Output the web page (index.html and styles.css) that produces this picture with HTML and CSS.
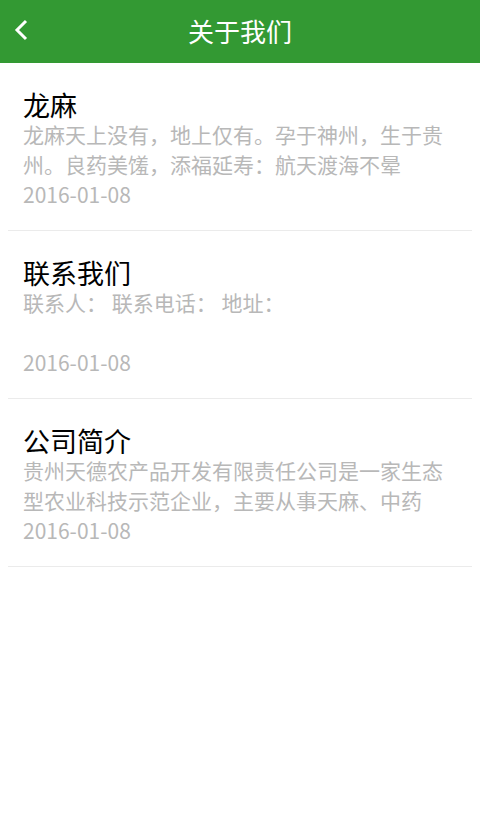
FILE: index.html
```html
<!DOCTYPE html>
<html lang="zh-CN">
<head>
<meta charset="utf-8">
<title>关于我们</title>
<link rel="stylesheet" href="styles.css">
</head>
<body>
<header class="topbar">
  <a class="back" href="#" aria-label="返回">
    <svg class="back-icon" width="14" height="22" viewBox="0 0 14 22">
      <polyline points="12,2 3,11 12,20" fill="none" stroke="#ffffff" stroke-width="3" stroke-linecap="butt" stroke-linejoin="miter"/>
    </svg>
  </a>
  <h1 class="title">关于我们</h1>
  <span class="spacer"></span>
</header>
<main class="list">
  <div class="item">
    <div class="item-title">龙麻</div>
    <div class="item-desc">龙麻天上没有，地上仅有。孕于神州，生于贵州。良药美馐，添福延寿：航天渡海不晕</div>
    <div class="item-date">2016-01-08</div>
  </div>
  <div class="item">
    <div class="item-title">联系我们</div>
    <div class="item-desc">联系人： 联系电话： 地址：</div>
    <div class="item-date">2016-01-08</div>
  </div>
  <div class="item">
    <div class="item-title">公司简介</div>
    <div class="item-desc">贵州天德农产品开发有限责任公司是一家生态型农业科技示范企业，主要从事天麻、中药</div>
    <div class="item-date">2016-01-08</div>
  </div>
</main>
</body>
</html>
```
FILE: styles.css
```css
html, body {
  margin: 0;
  padding: 0;
  background: #ffffff;
}
body {
  font-family: "Noto Sans CJK SC", "Noto Sans", sans-serif;
  width: 480px;
}
.topbar {
  height: 63px;
  background: #339933;
  display: grid;
  grid-template-columns: 1fr auto 1fr;
  align-items: center;
}
.back {
  display: flex;
  align-items: center;
  padding-left: 14px;
  height: 63px;
  margin-top: -4px;
}
.back-icon {
  display: block;
}
.title {
  margin: 0;
  color: #ffffff;
  font-size: 26px;
  font-weight: normal;
  line-height: 30px;
  margin-top: -2px;
}
.list {
  margin: 0 8px;
}
.item {
  height: 168px;
  box-sizing: border-box;
  padding: 27px 15px 0 15px;
  border-bottom: 1px solid #ebebeb;
  overflow: hidden;
}
.item-title {
  font-size: 27px;
  line-height: 29px;
  color: #000000;
}
.item-desc {
  font-size: 21px;
  line-height: 30px;
  height: 60px;
  overflow: hidden;
  color: #b8b8b8;
}
.item-date {
  font-size: 21px;
  line-height: 30px;
  color: #b8b8b8;
}
```
